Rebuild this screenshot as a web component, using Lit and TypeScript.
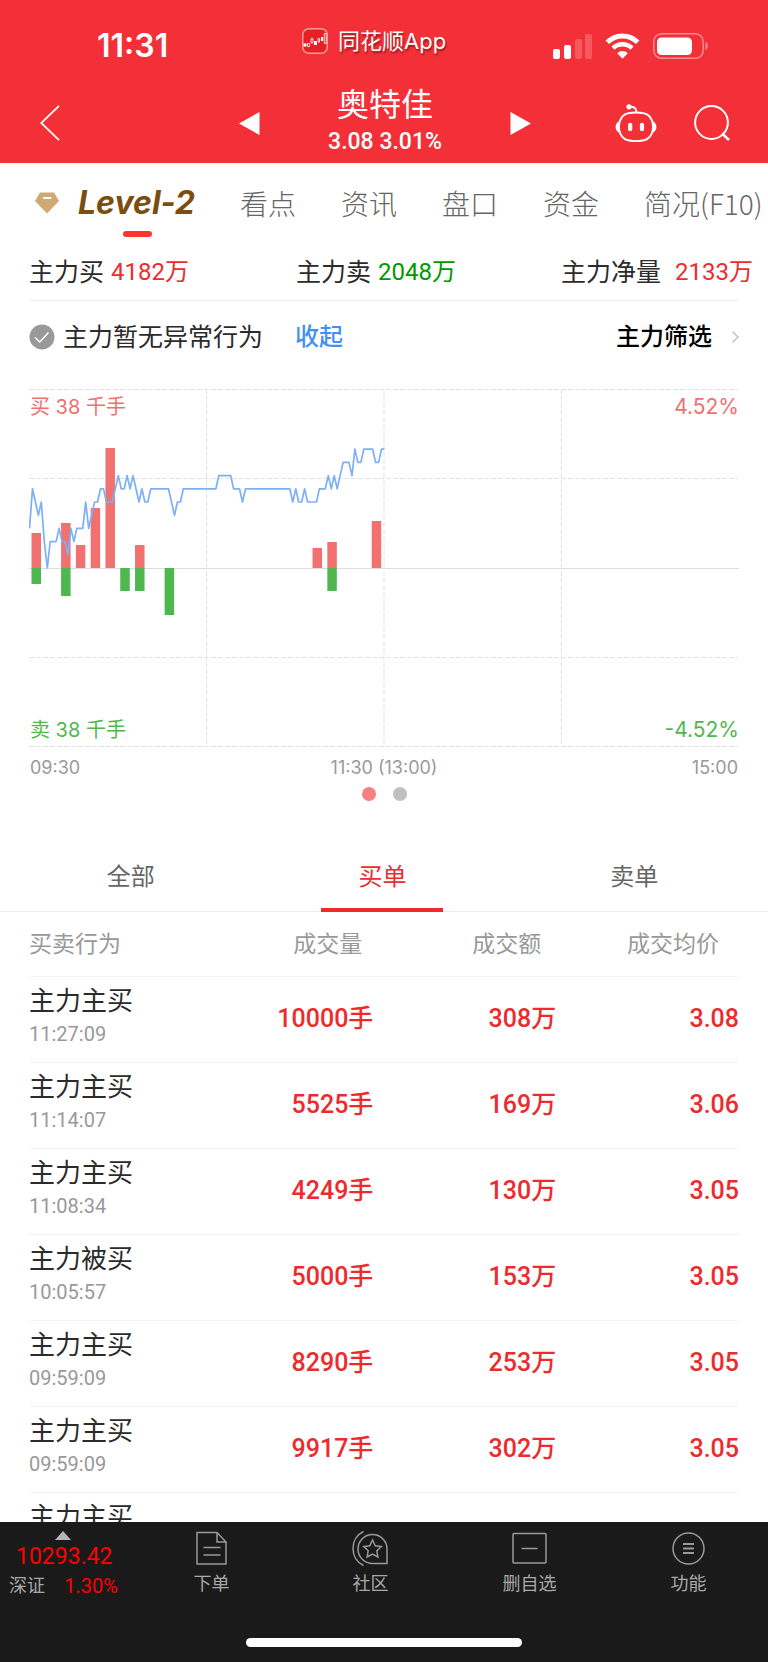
import { LitElement, html, svg, css, nothing } from "lit";
import { customElement, state } from "lit/decorators.js";
import { classMap } from "lit/directives/class-map.js";

interface Trade {
  name: string;
  time?: string;
  volume?: string;
  amount?: string;
  price?: string;
}

const TRADES: Trade[] = [
  { name: "主力主买", time: "11:27:09", volume: "10000", amount: "308", price: "3.08" },
  { name: "主力主买", time: "11:14:07", volume: "5525", amount: "169", price: "3.06" },
  { name: "主力主买", time: "11:08:34", volume: "4249", amount: "130", price: "3.05" },
  { name: "主力被买", time: "10:05:57", volume: "5000", amount: "153", price: "3.05" },
  { name: "主力主买", time: "09:59:09", volume: "8290", amount: "253", price: "3.05" },
  { name: "主力主买", time: "09:59:09", volume: "9917", amount: "302", price: "3.05" },
  { name: "主力主买" },
];

// One price tick level per minute, counted up from the previous close.
const PRICE_LEVELS = [
  3, 6, 5, 4, 5, 2, 0, 2, 2, 2, 3, 2, 2, 1, 3, 2, 3, 3, 3, 5, 3, 4, 5, 5, 6, 6, 5, 5, 5, 6, 7, 6, 6, 7, 6, 7, 6, 5, 6, 5, 5,
  ...Array(7).fill(6), 5, 4, 5, 5,
  ...Array(12).fill(6), 7, 7, 7, 7, 7, 6, 6, 6, 5,
  ...Array(16).fill(6), 5, 6, 5, 5, 6, 5, 5, 5, 5, 6, 6, 6, 7, 6, 7, 6, 7, 8, 8, 8, 7, 9, 8, 8, 9, 9, 9, 9, 8, 8, 9, 9,
];

// Five-minute buckets: slot, bought, sold (heights in chart units).
const BARS: [number, number, number][] = [
  [0, 35, 16], [2, 45, 28], [3, 23, 0], [4, 60, 0], [5, 120, 0], [6, 0, 23],
  [7, 23, 23], [9, 0, 47], [19, 20, 0], [20, 26, 23], [23, 47, 0],
];

const shared = css`
  :host {
    display: block;
  }
  * {
    box-sizing: border-box;
  }
  button {
    appearance: none;
    border: 0;
    background: none;
    margin: 0;
    padding: 0;
    font: inherit;
    color: inherit;
    cursor: pointer;
  }
  svg {
    display: block;
  }
`;

@customElement("stock-header")
class StockHeader extends LitElement {
  static styles = [
    shared,
    css`
      :host {
        background: #f33038;
        color: #fff;
      }
      .status {
        display: grid;
        grid-template-columns: 302fr 251fr 215fr;
        align-items: center;
        height: 86px;
        padding-top: 6px;
      }
      .time {
        padding-left: 97px;
        font-size: 32px;
        font-weight: 600;
        line-height: 40px;
      }
      .source {
        display: flex;
        align-items: center;
        gap: 10px;
        padding-bottom: 10px;
        font-size: 22px;
        line-height: 30px;
        white-space: nowrap;
        text-shadow: 1px 2px 2px rgba(80, 0, 0, 0.55);
      }
      .indicators {
        display: flex;
        align-items: center;
        gap: 13px;
      }
      .nav {
        display: grid;
        grid-template-columns: 1fr auto 1fr;
        align-items: center;
        height: 77px;
        padding: 0 38px 3px 40px;
      }
      .back {
        justify-self: start;
      }
      .stock {
        display: flex;
        align-items: center;
        gap: 64px;
      }
      .title {
        width: 122px;
        text-align: center;
        white-space: nowrap;
      }
      h1 {
        margin: 0;
        font-size: 32px;
        font-weight: 400;
        line-height: 38px;
      }
      .quote {
        font-family: Roboto, "Noto Sans CJK SC", sans-serif;
        font-size: 23px;
        font-weight: 500;
        line-height: 36px;
      }
      .tools {
        display: flex;
        align-items: center;
        justify-content: flex-end;
        gap: 37px;
      }
    `,
  ];

  render() {
    return html`
      <div class="status">
        <div class="time">11:31</div>
        <div class="source">
          <svg width="26" height="26" viewBox="0 0 26 26" aria-hidden="true">
            <rect x="0.75" y="0.75" width="24.5" height="24.5" rx="6" fill="#e81f24" stroke="#f99a9c" stroke-width="1.5" />
            <g fill="#fff">
              <rect x="1.5" y="15.5" width="3" height="3" />
              <rect x="12" y="13" width="3" height="4" />
              <rect x="19" y="9" width="2.2" height="4" />
            </g>
            <path d="M5.5 15.5h2v3h-2zM9 11h2v4H9zM16 10.5h1.6v3H16zM22.300 5.500h1.900v10h-1.900zM10 9.500v1.500M17 13.500v1.500" fill="none" stroke="#fff" stroke-width=".8" />
          </svg>
          <span>同花顺App</span>
        </div>
        <div class="indicators">
          <svg width="39" height="26" viewBox="0 0 39 26" fill="#fff" aria-label="信号">
            <rect x="0" y="16" width="7" height="10" rx="2" />
            <rect x="11" y="12" width="7" height="14" rx="2" />
            <rect x="22" y="6" width="7" height="20" rx="2" opacity=".2" />
            <rect x="32" y="1" width="7" height="25" rx="2" opacity=".2" />
          </svg>
          <svg width="35" height="26" viewBox="0 0 35 26" fill="none" stroke="#fff" aria-label="无线网络">
            <path d="M2.300 9.300A21.500 21.500 0 0 1 32.700 9.300" stroke-width="5" />
            <path d="M8 15.200A13.500 13.500 0 0 1 27 15.200" stroke-width="4.500" />
            <path d="M12.200 20.300a7.500 7.500 0 0 1 10.600 0L17.500 25.700z" fill="#fff" stroke="none" />
          </svg>
          <svg width="56" height="26" viewBox="0 0 56 26" aria-label="电量">
            <rect x="0.750" y="0.750" width="49.500" height="24.500" rx="8" fill="none" stroke="#fff" stroke-width="1.500" opacity=".45" />
            <rect x="4" y="4.500" width="35" height="17.500" rx="4.500" fill="#fff" />
            <path d="M52.500 9c3 1 3 7 0 8z" fill="#fff" opacity=".45" />
          </svg>
        </div>
      </div>
      <div class="nav">
        <button class="back" aria-label="返回">
          <svg width="22" height="36" viewBox="0 0 22 36" fill="none" stroke="#fff" stroke-width="1.800">
            <path d="M19 .8L1.200 18 19 35.200" />
          </svg>
        </button>
        <div class="stock">
          <button aria-label="上一只">
            <svg width="21" height="23" viewBox="0 0 21 23" fill="#fff"><path d="M20.500 0v23L0 11.500z" /></svg>
          </button>
          <div class="title">
            <h1>奥特佳</h1>
            <div class="quote">3.08 3.01%</div>
          </div>
          <button aria-label="下一只">
            <svg width="21" height="23" viewBox="0 0 21 23" fill="#fff"><path d="M.5 0v23L21 11.500z" /></svg>
          </button>
        </div>
        <div class="tools">
          <button aria-label="智能助手">
            <svg width="42" height="38" viewBox="0 0 42 38" fill="none" stroke="#fff" stroke-width="2">
              <path d="M14 2.800c5-.8 7.500 1.400 7.500 5.700" />
              <circle cx="14" cy="2.800" r="2.600" fill="#fff" stroke="none" />
              <path d="M21 8.500c10 0 14 2.500 16 8 1.300 4 1.300 9 0 12.500-2 5.500-6 8-16 8s-14-2.500-16-8c-1.300-3.500-1.300-8.500 0-12.500 2-5.500 6-8 16-8z" />
              <path d="M4 17.500c-4.500 1.500-4.500 9.500 0 11zM38 17.500c4.500 1.500 4.500 9.500 0 11z" fill="#fff" stroke="none" />
              <path d="M15.200 20.800v4.400M27 20.800v4.400" stroke-width="4.200" stroke-linecap="round" />
            </svg>
          </button>
          <button aria-label="搜索">
            <svg width="36" height="36" viewBox="0 0 36 36" fill="none" stroke="#fff" stroke-width="2">
              <circle cx="17.500" cy="17.500" r="16.400" />
              <path d="M28 28.500l7 6.500" stroke-width="2.500" />
            </svg>
          </button>
        </div>
      </div>
    `;
  }
}

@customElement("flow-chart")
class FlowChart extends LitElement {
  static styles = [
    shared,
    css`
      .plot {
        display: grid;
      }
      .plot > * {
        grid-area: 1 / 1;
      }
      .canvas {
        width: 100%;
        height: auto;
      }
      .scale {
        display: grid;
        grid-template-columns: auto auto;
        justify-content: space-between;
        align-content: space-between;
        padding: 4px 0 3px 1px;
        font-size: 20px;
        line-height: 30px;
      }
      .pct {
        font-size: 21px;
        text-align: right;
      }
      .up {
        color: #f07070;
      }
      .down {
        color: #4eb84e;
      }
      .axis {
        display: grid;
        grid-template-columns: 1fr auto 1fr;
        margin-top: 8px;
        padding: 0 1px;
        color: #999;
        font-size: 18px;
        line-height: 24px;
      }
      .end {
        text-align: right;
      }
    `,
  ];

  render() {
    const minute = 710 / 240;
    const line = PRICE_LEVELS.map((l, i) => `${(i * minute + 0.5).toFixed(1)},${(179 - l * 13.2).toFixed(1)}`).join(" ");
    return html`
      <div class="plot">
        <svg class="canvas" viewBox="0 -1 710 360" role="img" aria-label="主力买卖分时图">
          <g stroke="#e3e3e3" stroke-width="1" stroke-dasharray="5 2" fill="none">
            ${[0.5, 89.5, 268.5, 357.5].map((y) => svg`<path d="M0 ${y}H709" />`)}
            ${[177.5, 355, 532.5].map((x) => svg`<path d="M${x} 0V358" />`)}
          </g>
          <path d="M0 179.500H710" stroke="#dcdcdc" />
          ${BARS.map(([slot, up, down]) => {
            const x = 2.5 + slot * minute * 5;
            return svg`
              ${up ? svg`<rect x=${x} y=${179 - up} width="9.500" height=${up} fill="#f17070" />` : nothing}
              ${down ? svg`<rect x=${x} y="179" width="9.500" height=${down} fill="#4eb84e" />` : nothing}`;
          })}
          <polyline points=${line} fill="none" stroke="#7db0f5" stroke-width="1.700" stroke-linejoin="round" />
        </svg>
        <div class="scale">
          <span class="up">买 38 千手</span><span class="pct up">4.52%</span>
          <span class="down">卖 38 千手</span><span class="pct down">-4.52%</span>
        </div>
      </div>
      <div class="axis"><span>09:30</span><span>11:30 (13:00)</span><span class="end">15:00</span></div>
    `;
  }
}

@customElement("trade-table")
class TradeTable extends LitElement {
  static styles = [
    shared,
    css`
      table {
        width: 100%;
        table-layout: fixed;
        border-collapse: collapse;
      }
      .c-name {
        width: 23%;
      }
      .c-vol {
        width: 25.5%;
      }
      th,
      td {
        padding: 0;
        border-bottom: 1px solid #f3f3f3;
        text-align: right;
        font-weight: 400;
        white-space: nowrap;
      }
      th {
        height: 64px;
        color: #999;
        font-size: 23px;
        line-height: 32px;
      }
      .h-vol {
        padding-right: 11px;
      }
      .h-amt {
        padding-right: 15px;
      }
      .h-price {
        padding-right: 20px;
      }
      td {
        height: 86px;
        color: #ed2b2d;
        font-family: Roboto, "Noto Sans CJK SC", sans-serif;
        font-size: 25px;
        font-weight: 500;
        line-height: 34px;
      }
      .first {
        text-align: left;
      }
      td.first {
        padding-top: 6px;
        vertical-align: top;
      }
      .name {
        color: #2b2b2b;
        font-size: 26px;
        font-weight: 400;
        line-height: 36px;
      }
      .time {
        color: #999;
        font-size: 20px;
        font-weight: 400;
        line-height: 30px;
      }
    `,
  ];

  render() {
    return html`
      <table>
        <colgroup>
          <col class="c-name" />
          <col class="c-vol" />
          <col />
          <col />
        </colgroup>
        <thead>
          <tr>
            <th class="first" scope="col">买卖行为</th>
            <th class="h-vol" scope="col">成交量</th>
            <th class="h-amt" scope="col">成交额</th>
            <th class="h-price" scope="col">成交均价</th>
          </tr>
        </thead>
        <tbody>
          ${TRADES.map(
            (t) => html`<tr>
              <td class="first">
                <div class="name">${t.name}</div>
                <div class="time">${t.time ?? nothing}</div>
              </td>
              <td>${t.volume ? `${t.volume}手` : nothing}</td>
              <td>${t.amount ? `${t.amount}万` : nothing}</td>
              <td>${t.price ?? nothing}</td>
            </tr>`
          )}
        </tbody>
      </table>
    `;
  }
}

@customElement("bottom-bar")
class BottomBar extends LitElement {
  static styles = [
    shared,
    css`
      :host {
        background: #1a1a1a;
        color: #a8a8a8;
      }
      .items {
        display: flex;
        height: 116px;
      }
      .index {
        display: flex;
        flex-direction: column;
        width: 132px;
        padding-top: 9px;
        font-family: Roboto, "Noto Sans CJK SC", sans-serif;
      }
      .arrow {
        margin-left: 55px;
      }
      .value {
        padding-left: 16px;
        text-align: left;
        color: #f00;
        font-size: 23px;
        line-height: 34px;
      }
      .change {
        display: flex;
        align-self: stretch;
        justify-content: space-between;
        padding: 0 14px 0 9px;
        font-size: 18px;
        line-height: 24px;
      }
      .pct {
        color: #f00;
        font-size: 20px;
      }
      .item {
        flex: 1;
        display: flex;
        flex-direction: column;
        align-items: center;
        gap: 3px;
        padding-top: 8px;
        font-size: 18px;
        line-height: 28px;
      }
      .home {
        width: 36%;
        height: 9px;
        margin: 0 auto 15px;
        border-radius: 5px;
        background: #fff;
      }
    `,
  ];

  private icons = [
    {
      label: "下单",
      art: svg`<path d="M4 2.500h20l9 9.500v22H4zM24 2.500V12h9M10.500 17.500h17M10.500 25h17" />`,
    },
    {
      label: "社区",
      art: svg`<path d="M35 33.500H20.500a14.500 14.500 0 1 1 14.500-14.500zM11.500 1.500C-2.500 8-2.500 29 11.500 35.500" />
        <path d="M20.500 10l2.700 5.700 6.100.8-4.500 4.300 1.100 6.200-5.400-3-5.400 3 1.100-6.200-4.500-4.300 6.100-.8z" />`,
    },
    {
      label: "删自选",
      art: svg`<rect x="2" y="3.500" width="33" height="29.500" rx="1" /><path d="M10.500 18.500h16" />`,
    },
    {
      label: "功能",
      art: svg`<circle cx="18.500" cy="18.500" r="15.500" /><path d="M13 14h11M13 18.500h11M13 23h11" stroke-width="2" />`,
    },
  ];

  render() {
    return html`
      <nav class="items">
        <button class="index">
          <svg class="arrow" width="16" height="9" viewBox="0 0 16 9" fill="#b5b5b5"><path d="M8 0l8 9H0z" /></svg>
          <div class="value">10293.42</div>
          <div class="change"><span>深证</span><span class="pct">1.30%</span></div>
        </button>
        ${this.icons.map(
          (i) => html`<button class="item">
            <svg width="37" height="37" viewBox="0 0 37 37" fill="none" stroke="#999" stroke-width="1.500" aria-hidden="true">${i.art}</svg>
            <span>${i.label}</span>
          </button>`
        )}
      </nav>
      <div class="home"></div>
    `;
  }
}

@customElement("app-root")
class AppRoot extends LitElement {
  static styles = [
    shared,
    css`
      :host {
        display: flex;
        flex-direction: column;
        height: 100vh;
        overflow: hidden;
        background: #fff;
        color: #2b2b2b;
        font-family: Inter, "Noto Sans CJK SC", sans-serif;
      }
      main {
        flex: 1;
        min-height: 0;
        overflow-y: auto;
        overflow-x: hidden;
        scrollbar-width: none;
      }
      .sections {
        display: flex;
        align-items: center;
        gap: 45px;
        height: 80px;
        padding-left: 35px;
        color: #666;
        font-family: "Noto Sans CJK SC", sans-serif;
        font-size: 28px;
        font-weight: 300;
        line-height: 40px;
        white-space: nowrap;
      }
      .level {
        position: relative;
        display: flex;
        align-items: center;
        gap: 19px;
        height: 80px;
        color: #7a4d10;
        font-family: Inter, sans-serif;
        font-size: 32px;
        font-style: italic;
        font-weight: 700;
      }
      .level::after {
        content: "";
        position: absolute;
        bottom: 6px;
        left: 88px;
        width: 29px;
        height: 6px;
        border-radius: 3px;
        background: #fb3630;
      }
      .sheet {
        padding: 0 29px;
      }
      .totals {
        display: grid;
        grid-template-columns: minmax(0, 267fr) minmax(0, 265fr) minmax(0, 178fr);
        align-items: center;
        height: 58px;
        border-bottom: 1px solid #ececec;
        font-size: 25px;
        line-height: 36px;
        white-space: nowrap;
      }
      .total {
        display: flex;
        gap: 7px;
      }
      .wide {
        gap: 14px;
      }
      .num {
        font-family: Roboto, "Noto Sans CJK SC", sans-serif;
        font-size: 24px;
      }
      .red {
        color: #ee2b2d;
      }
      .green {
        color: #009900;
      }
      .notice {
        display: flex;
        align-items: center;
        height: 72px;
        margin-bottom: 15px;
        font-size: 25px;
        line-height: 36px;
      }
      .message {
        margin: 0 32px 0 8px;
      }
      .fold,
      .filter {
        font-size: 24px;
        font-weight: 500;
      }
      .fold {
        color: #4290f2;
      }
      .filter {
        display: flex;
        align-items: center;
        gap: 20px;
        margin-left: auto;
        color: #000;
      }
      .pages {
        display: flex;
        justify-content: center;
        gap: 17px;
        margin: 7px 0 42px;
      }
      .page {
        width: 14px;
        height: 14px;
        border-radius: 50%;
        background: #c0c0c0;
      }
      .current {
        background: #f58080;
      }
      .orders {
        display: grid;
        grid-template-columns: repeat(3, 1fr);
        padding: 0 8px 0 5px;
        border-bottom: 1px solid #ececec;
      }
      .order {
        position: relative;
        height: 68px;
        color: #666;
        font-size: 24px;
        line-height: 34px;
      }
      .active {
        color: #ee2b2d;
      }
      .active::after {
        content: "";
        position: absolute;
        bottom: -1px;
        left: 50%;
        width: 122px;
        height: 4px;
        margin-left: -61px;
        background: #ee2b2d;
      }
    `,
  ];

  @state() private order = "买单";

  render() {
    return html`
      <stock-header></stock-header>
      <main>
        <nav class="sections">
          <button class="level">
            <svg width="24" height="22" viewBox="0 0 24 22">
              <path d="M5 .5h14l5 8.500L12 21.500 0 9z" fill="#cfa974" />
              <rect x="8" y="5" width="8.500" height="2" rx="1" fill="#fff" />
            </svg>
            <span>Level-2</span>
          </button>
          ${["看点", "资讯", "盘口", "资金", "简况(F10)"].map((s) => html`<button>${s}</button>`)}
        </nav>
        <div class="sheet">
          <div class="totals">
            <div class="total"><span>主力买</span><span class="num red">4182万</span></div>
            <div class="total"><span>主力卖</span><span class="num green">2048万</span></div>
            <div class="total wide"><span>主力净量</span><span class="num red">2133万</span></div>
          </div>
          <div class="notice">
            <svg width="26" height="26" viewBox="0 0 26 26">
              <circle cx="13" cy="13" r="12.500" fill="#999" />
              <path d="M6 13.500l4.800 4.500L19.500 8.500" fill="none" stroke="#fff" stroke-width="1.500" />
            </svg>
            <span class="message">主力暂无异常行为</span>
            <button class="fold">收起</button>
            <button class="filter">
              <span>主力筛选</span>
              <svg width="7" height="12" viewBox="0 0 7 12" fill="none" stroke="#bbb" stroke-width="1.300"><path d="M.7.700L6 6 .7 11.300" /></svg>
            </button>
          </div>
          <flow-chart></flow-chart>
        </div>
        <div class="pages"><span class="page current"></span><span class="page"></span></div>
        <div class="orders" role="tablist">
          ${["全部", "买单", "卖单"].map(
            (o) => html`<button
              role="tab"
              aria-selected=${o === this.order}
              class=${classMap({ order: true, active: o === this.order })}
              @click=${() => (this.order = o)}
            >
              ${o}
            </button>`
          )}
        </div>
        <div class="sheet"><trade-table></trade-table></div>
      </main>
      <bottom-bar></bottom-bar>
    `;
  }
}
